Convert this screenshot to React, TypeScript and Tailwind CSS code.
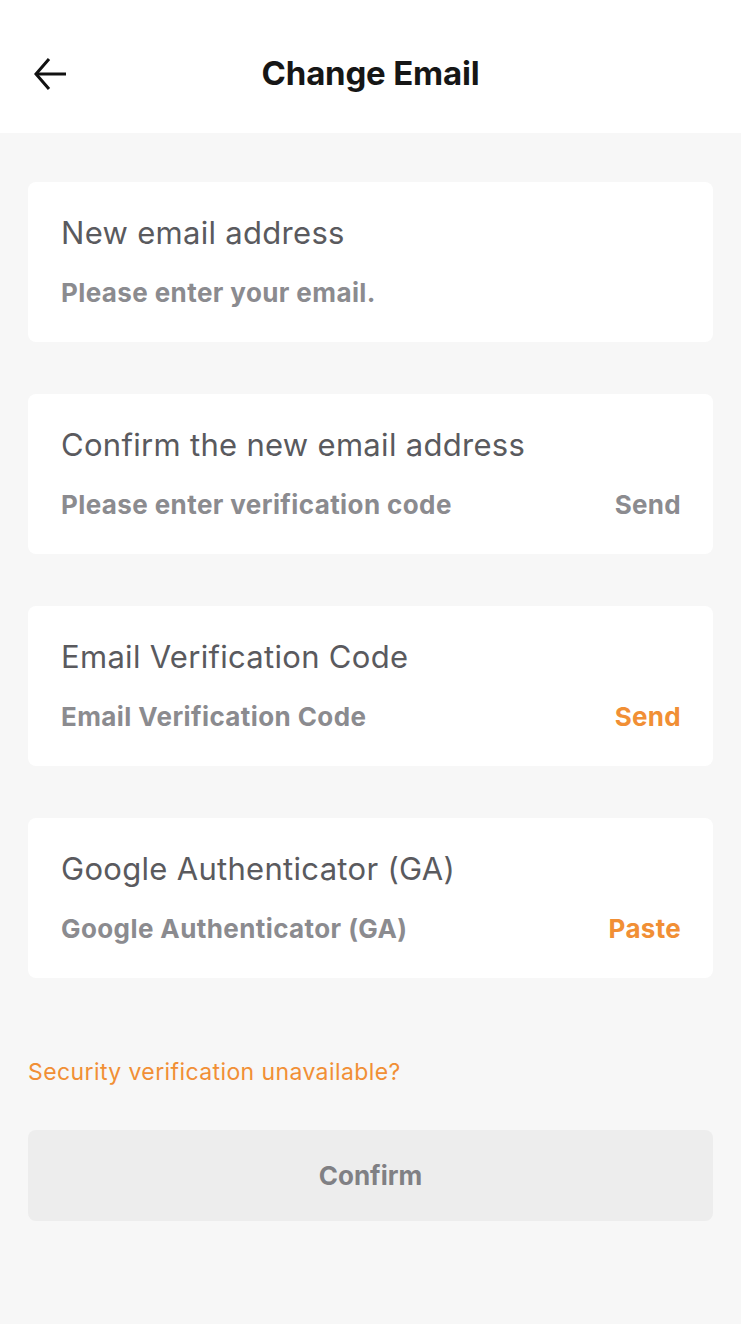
import React from 'react';

type Field = {
  label: string;
  placeholder: string;
  action?: string;
  actionActive?: boolean;
};

const FIELDS: Field[] = [
  { label: 'New email address', placeholder: 'Please enter your email.' },
  { label: 'Confirm the new email address', placeholder: 'Please enter verification code', action: 'Send' },
  { label: 'Email Verification Code', placeholder: 'Email Verification Code', action: 'Send', actionActive: true },
  { label: 'Google Authenticator (GA)', placeholder: 'Google Authenticator (GA)', action: 'Paste', actionActive: true },
];

const BackArrow = () => (
  <svg width="34" height="34" viewBox="0 0 34 34" fill="none" stroke="#111" strokeWidth="3" strokeLinecap="butt" strokeLinejoin="miter">
    <path d="M33 17H4" />
    <path d="M16 2L3 17l13 15" />
  </svg>
);

const App: React.FC = () => {
  return (
    <div className="min-h-screen bg-[#f7f7f7] font-['Inter','Noto_Sans',sans-serif]">
      <header className="relative flex h-[133px] items-center justify-center bg-white pt-[14px]">
        <button className="absolute left-[33px] top-[57px]">
          <BackArrow />
        </button>
        <h1 className="text-[33px] font-bold tracking-[-0.2px] text-[#161616]">Change Email</h1>
      </header>

      <main className="flex flex-col px-[28px] pt-[49px]">
        <div className="flex flex-col gap-[52px]">
          {FIELDS.map((f) => (
            <div key={f.label} className="flex h-[160px] flex-col rounded-[8px] bg-white pl-[33px] pr-[32px] pt-[33px]">
              <span className="text-[31px] leading-[36px] tracking-[0.3px] text-[#5a5a5e]">{f.label}</span>
              <div className="mt-[27px] flex items-center justify-between">
                <span className="text-[26px] font-bold leading-[30px] tracking-[0.4px] text-[#8b8b8f]">{f.placeholder}</span>
                {f.action && (
                  <span className={`text-[26px] font-bold leading-[30px] tracking-[0.3px] ${f.actionActive ? 'text-[#f18f35]' : 'text-[#8b8b8f]'}`}>
                    {f.action}
                  </span>
                )}
              </div>
            </div>
          ))}
        </div>

        <a className="mt-[80px] text-[23px] leading-[28px] tracking-[0.4px] text-[#f18f35]">Security verification unavailable?</a>

        <button className="mt-[44px] flex h-[91px] items-center justify-center rounded-[8px] bg-[#ededed] text-[26px] font-bold text-[#808084]">
          Confirm
        </button>
      </main>
    </div>
  );
};

export default App;
